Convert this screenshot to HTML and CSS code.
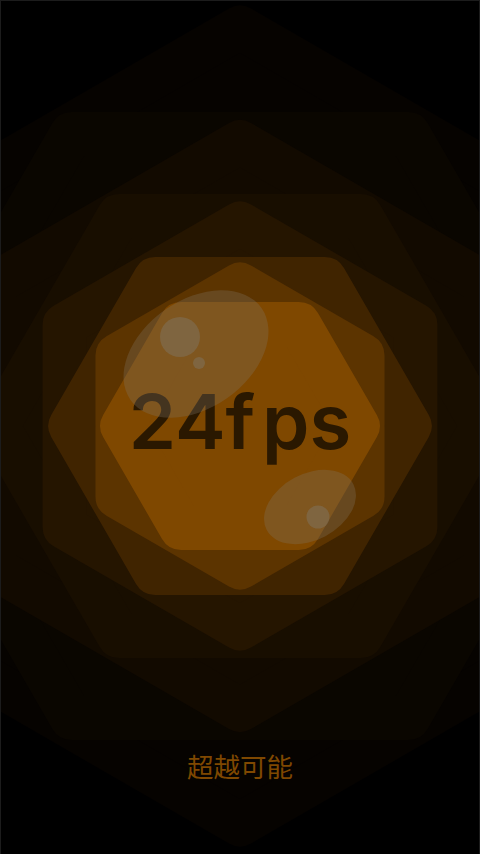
FILE: index.html
```html
<!DOCTYPE html>
<html lang="zh">
<head>
    <meta charset="UTF-8">
    <meta name="viewport" content="width=device-width, initial-scale=1.0">
    <title>24fps</title>
    <link rel="stylesheet" href="styles.css">
</head>
<body>
    <div class="splash">
        <svg class="hexagons" viewBox="0 0 480 854">
            <polygon class="hex hex-8" points="240,27.5 585.1,226.75 585.1,625.25 240,824.5 -105.1,625.25 -105.1,226.75"/>
            <polygon class="hex hex-7" points="-97.2,426 71.4,134 408.6,134 577.2,426 408.6,718 71.4,718"/>
            <polygon class="hex hex-6" points="240,142 486,284 486,568 240,710 -6,568 -6,284"/>
            <polygon class="hex hex-5" points="-2.5,426 118.8,216 361.2,216 482.5,426 361.2,636 118.8,636"/>
            <polygon class="hex hex-4" points="240,223.5 415.4,324.75 415.4,527.25 240,628.5 64.6,527.25 64.6,324.75"/>
            <polygon class="hex hex-3" points="70.3,426 155.1,279 324.9,279 409.7,426 324.9,573 155.1,573"/>
            <polygon class="hex hex-2" points="240,284.5 362.5,355.25 362.5,496.75 240,567.5 117.5,496.75 117.5,355.25"/>
            <polygon class="hex hex-1" points="122.2,426 181.1,324 298.9,324 357.8,426 298.9,528 181.1,528"/>
        </svg>

        <h1 class="logo">24f<span class="logo-end">ps</span></h1>
        <p class="slogan">超越可能</p>

        <!-- bubbles sit on top of the logo -->
        <svg class="bubbles" viewBox="0 0 480 854">
            <ellipse class="bubble" cx="196" cy="354" rx="80" ry="54" transform="rotate(-35 196 354)"/>
            <circle class="bubble-dot" cx="180" cy="337" r="20"/>
            <circle class="bubble-dot" cx="199" cy="363" r="6"/>
            <ellipse class="bubble" cx="310" cy="507" rx="49" ry="33" transform="rotate(-28 310 507)"/>
            <circle class="bubble-dot" cx="318" cy="517" r="11.5"/>
        </svg>
    </div>
</body>
</html>
```

FILE: styles.css
```css
html, body {
    margin: 0;
    padding: 0;
    background-color: #000;
}

.splash {
    position: relative;
    display: flex;
    flex-direction: column;
    align-items: center;
    width: 480px;
    height: 854px;
    overflow: hidden;
    background-color: #000;
}

.hexagons, .bubbles {
    position: absolute;
    top: 0;
    left: 0;
    width: 480px;
    height: 854px;
}

/* thin frame of the screenshot */
.bubbles {
    box-shadow: inset 0 1px 0 #1c1c1c, inset 1px 0 0 #1c1c1c, inset -1px 0 0 #1c1c1c;
}

.hex {
    stroke-width: 44;
    stroke-linejoin: round;
}

.hex-8 { fill: #060300; stroke: #060300; }
.hex-7 { fill: #0a0600; stroke: #0a0600; }
.hex-6 { fill: #120a00; stroke: #120a00; }
.hex-5 { fill: #180e00; stroke: #180e00; }
.hex-4 { fill: #251500; stroke: #251500; }
.hex-3 { fill: #402400; stroke: #402400; }
.hex-2 { fill: #5c3400; stroke: #5c3400; }
.hex-1 { fill: #7f4800; stroke: #7f4800; }

.logo {
    position: relative;
    margin: 375px 0 0;
    font-family: Inter, "Liberation Sans", sans-serif;
    font-size: 76px;
    font-weight: 600;
    line-height: 92px;
    color: #2a1800;
}

.logo-end {
    margin-left: 7px;
}

.slogan {
    position: relative;
    margin: 281px 0 0;
    font-family: "Noto Sans CJK SC", sans-serif;
    font-size: 26.5px;
    font-weight: 400;
    line-height: 36px;
    color: #7f4800;
}

.bubble {
    fill: #807868;
    fill-opacity: 0.3;
}

.bubble-dot {
    fill: #807868;
    fill-opacity: 0.45;
}
```
